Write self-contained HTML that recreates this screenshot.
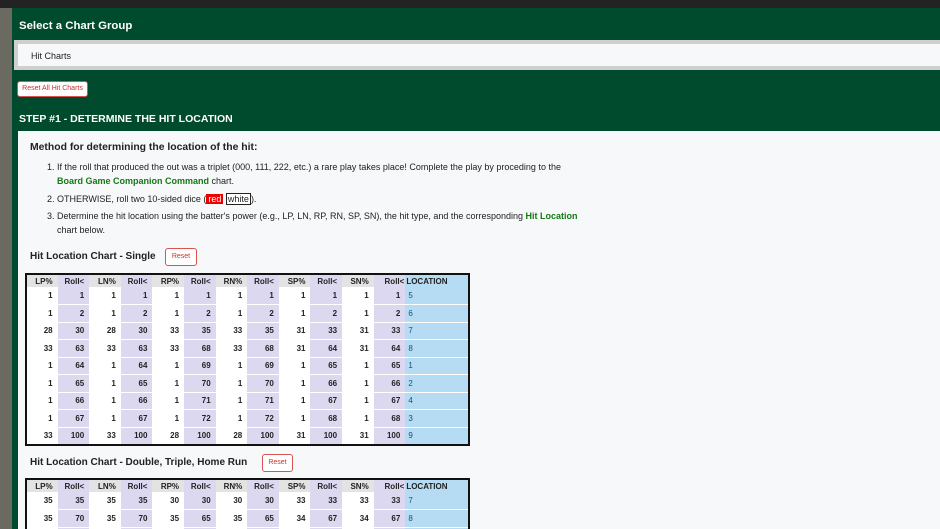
<!DOCTYPE html>
<html><head><style>
*{margin:0;padding:0;box-sizing:border-box}
html,body{width:940px;height:529px;overflow:hidden}
body{background:#6b6a60;font-family:"Liberation Sans",sans-serif;position:relative}
.top{position:absolute;left:0;top:0;width:940px;height:8px;background:#232323}
.green{position:absolute;left:12px;top:8px;width:928px;height:521px;background:#004a2e}
.h1{position:absolute;left:19px;top:20px;color:#fff;font-size:11.4px;font-weight:bold}
.sel{position:absolute;left:14px;top:40px;width:926px;height:30px;background:#cfcfcf;padding:4px 0 0 4px}
.sel div{background:#f7f8fa;height:22px;font-size:9px;line-height:24px;padding-left:13px;color:#222}
.rbtn{position:absolute;background:#fff;border:1px solid #d9534f;color:#c9302c;font-size:7px;border-radius:3px;text-align:center}
.h2{position:absolute;left:19px;top:113px;color:#fff;font-size:10.5px;font-weight:bold}
.content{position:absolute;left:18px;top:131px;width:922px;height:398px;background:#f7f8fa}
.m{position:absolute;left:30px;top:142px;font-size:10.4px;font-weight:bold;color:#222}
ol{position:absolute;left:57px;top:160px;font-size:9px;color:#222;line-height:14px;width:524px}
li{margin-bottom:3.5px}
.g{color:#137a13;font-weight:bold}
.red{background:#e00;color:#fff;padding:0 2px}
.wh{border:1px solid #222;padding:0 1px;background:#fff}
.ct{position:absolute;left:30px;font-size:10px;font-weight:bold;color:#222}
table{position:absolute;left:25px;border:2px solid #111;border-collapse:collapse;background:#f7f8fa;font-size:8px;font-weight:bold;color:#222;table-layout:fixed}
td{height:17.5px;width:31.3px;text-align:right;padding-right:5px;border-bottom:1px solid #fff}
td.l{width:63px;text-align:left;padding-left:3px;background:#b5dcf2;color:#1a4c80;font-weight:normal}
td.r{background:#dcd8f0}
td.p{background:#fff}
tr.hd td{height:13px;border:0}
tr.hd td.p{background:#e3e3e3}
</style></head><body>
<div class="top"></div>
<div class="green"></div>
<div class="h1">Select a Chart Group</div>
<div class="sel"><div>Hit Charts</div></div>
<div class="rbtn" style="left:17px;top:81px;width:71px;height:16px;line-height:14px">Reset All Hit Charts</div>
<div class="h2">STEP #1 - DETERMINE THE HIT LOCATION</div>
<div class="content"></div>
<div class="m">Method for determining the location of the hit:</div>
<ol>
<li>If the roll that produced the out was a triplet (000, 111, 222, etc.) a rare play takes place! Complete the play by proceding to the <span class="g">Board Game Companion Command</span> chart.</li>
<li>OTHERWISE, roll two 10-sided dice (<span class="red">red</span> <span class="wh">white</span>).</li>
<li>Determine the hit location using the batter's power (e.g., LP, LN, RP, RN, SP, SN), the hit type, and the corresponding <span class="g">Hit Location</span> chart below.</li>
</ol>
<div class="ct" style="top:251px">Hit Location Chart - Single</div>
<div class="rbtn" style="left:165px;top:248px;width:32px;height:18px;line-height:16px">Reset</div>
<table style="top:273px;width:445px">
<tr class="hd"><td class="p">LP%</td><td class="r">Roll&lt;</td><td class="p">LN%</td><td class="r">Roll&lt;</td><td class="p">RP%</td><td class="r">Roll&lt;</td><td class="p">RN%</td><td class="r">Roll&lt;</td><td class="p">SP%</td><td class="r">Roll&lt;</td><td class="p">SN%</td><td class="r" style="padding-right:1px">Roll&lt;</td><td class="l" style="font-weight:bold;color:#222;padding-left:1px">LOCATION</td></tr>
<tr><td class="p">1</td><td class="r">1</td><td class="p">1</td><td class="r">1</td><td class="p">1</td><td class="r">1</td><td class="p">1</td><td class="r">1</td><td class="p">1</td><td class="r">1</td><td class="p">1</td><td class="r">1</td><td class="l">5</td></tr>
<tr><td class="p">1</td><td class="r">2</td><td class="p">1</td><td class="r">2</td><td class="p">1</td><td class="r">2</td><td class="p">1</td><td class="r">2</td><td class="p">1</td><td class="r">2</td><td class="p">1</td><td class="r">2</td><td class="l">6</td></tr>
<tr><td class="p">28</td><td class="r">30</td><td class="p">28</td><td class="r">30</td><td class="p">33</td><td class="r">35</td><td class="p">33</td><td class="r">35</td><td class="p">31</td><td class="r">33</td><td class="p">31</td><td class="r">33</td><td class="l">7</td></tr>
<tr><td class="p">33</td><td class="r">63</td><td class="p">33</td><td class="r">63</td><td class="p">33</td><td class="r">68</td><td class="p">33</td><td class="r">68</td><td class="p">31</td><td class="r">64</td><td class="p">31</td><td class="r">64</td><td class="l">8</td></tr>
<tr><td class="p">1</td><td class="r">64</td><td class="p">1</td><td class="r">64</td><td class="p">1</td><td class="r">69</td><td class="p">1</td><td class="r">69</td><td class="p">1</td><td class="r">65</td><td class="p">1</td><td class="r">65</td><td class="l">1</td></tr>
<tr><td class="p">1</td><td class="r">65</td><td class="p">1</td><td class="r">65</td><td class="p">1</td><td class="r">70</td><td class="p">1</td><td class="r">70</td><td class="p">1</td><td class="r">66</td><td class="p">1</td><td class="r">66</td><td class="l">2</td></tr>
<tr><td class="p">1</td><td class="r">66</td><td class="p">1</td><td class="r">66</td><td class="p">1</td><td class="r">71</td><td class="p">1</td><td class="r">71</td><td class="p">1</td><td class="r">67</td><td class="p">1</td><td class="r">67</td><td class="l">4</td></tr>
<tr><td class="p">1</td><td class="r">67</td><td class="p">1</td><td class="r">67</td><td class="p">1</td><td class="r">72</td><td class="p">1</td><td class="r">72</td><td class="p">1</td><td class="r">68</td><td class="p">1</td><td class="r">68</td><td class="l">3</td></tr>
<tr><td class="p">33</td><td class="r">100</td><td class="p">33</td><td class="r">100</td><td class="p">28</td><td class="r">100</td><td class="p">28</td><td class="r">100</td><td class="p">31</td><td class="r">100</td><td class="p">31</td><td class="r">100</td><td class="l">9</td></tr>
</table>
<div class="ct" style="top:457px">Hit Location Chart - Double, Triple, Home Run</div>
<div class="rbtn" style="left:262px;top:454px;width:31px;height:18px;line-height:16px">Reset</div>
<table style="top:478px;width:445px">
<tr class="hd"><td class="p">LP%</td><td class="r">Roll&lt;</td><td class="p">LN%</td><td class="r">Roll&lt;</td><td class="p">RP%</td><td class="r">Roll&lt;</td><td class="p">RN%</td><td class="r">Roll&lt;</td><td class="p">SP%</td><td class="r">Roll&lt;</td><td class="p">SN%</td><td class="r" style="padding-right:1px">Roll&lt;</td><td class="l" style="font-weight:bold;color:#222;padding-left:1px">LOCATION</td></tr>
<tr><td class="p">35</td><td class="r">35</td><td class="p">35</td><td class="r">35</td><td class="p">30</td><td class="r">30</td><td class="p">30</td><td class="r">30</td><td class="p">33</td><td class="r">33</td><td class="p">33</td><td class="r">33</td><td class="l">7</td></tr>
<tr><td class="p">35</td><td class="r">70</td><td class="p">35</td><td class="r">70</td><td class="p">35</td><td class="r">65</td><td class="p">35</td><td class="r">65</td><td class="p">34</td><td class="r">67</td><td class="p">34</td><td class="r">67</td><td class="l">8</td></tr>
<tr><td class="p">30</td><td class="r">100</td><td class="p">30</td><td class="r">100</td><td class="p">35</td><td class="r">100</td><td class="p">35</td><td class="r">100</td><td class="p">33</td><td class="r">100</td><td class="p">33</td><td class="r">100</td><td class="l">9</td></tr>
</table>
</body></html>
